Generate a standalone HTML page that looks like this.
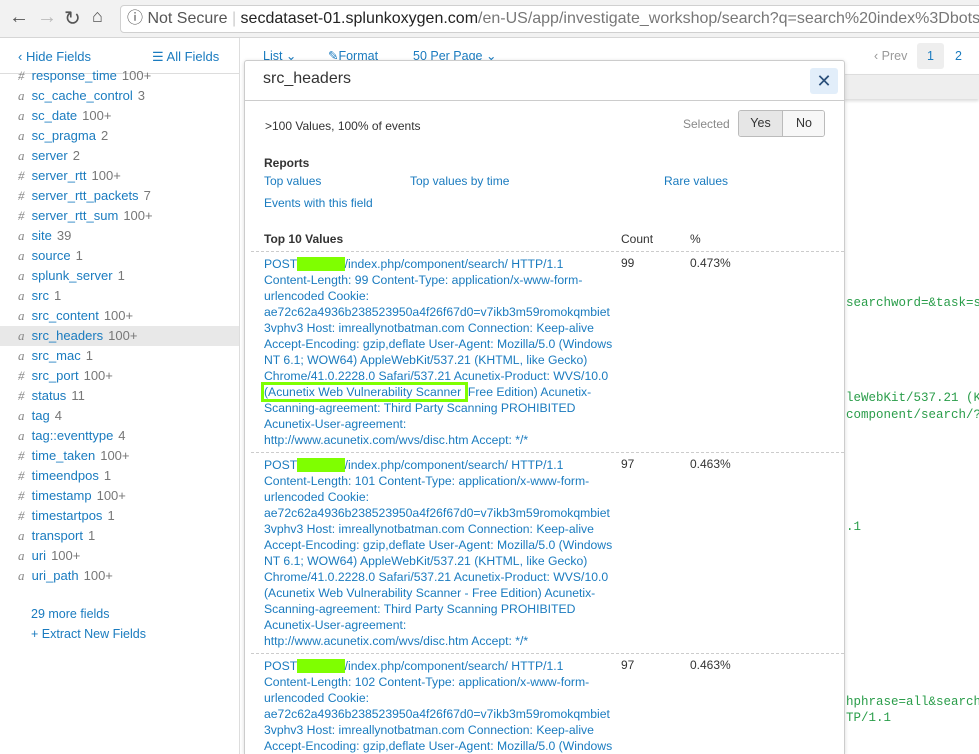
<!DOCTYPE html>
<html><head><meta charset="utf-8"><style>
*{box-sizing:border-box;margin:0;padding:0}
html{width:979px;height:754px;overflow:hidden}
body{width:979px;height:754px;overflow:hidden;background:#fff;font-family:"Liberation Sans",Arial,sans-serif;position:relative;color:#333}
.chrome{position:absolute;left:0;top:0;width:979px;height:38px;background:#f2f2f2;border-bottom:1px solid #d6d6d6}
.addr{position:absolute;left:120px;top:5px;width:870px;height:28px;background:#fff;border:1px solid #d0d0d0;border-radius:4px;font-size:16px;line-height:26px;white-space:nowrap;overflow:hidden}
.nav{position:absolute;top:6px;font-size:20px;color:#555}
.side{position:absolute;left:0;top:38px;width:240px;height:716px;border-right:1px solid #ddd;background:#fff;overflow:hidden}
.f{position:absolute;left:0;width:240px;height:20px;font-size:13px;line-height:20px;padding-left:18px;white-space:nowrap}
.f i{font-style:italic;color:#888;display:inline-block;width:10px;font-family:"Liberation Serif",serif}
.f b{font-weight:normal;color:#1a7bbf}
.f s{text-decoration:none;color:#777;margin-left:5px}
.lnk{color:#1a7bbf}
.pop{position:absolute;left:244px;top:60px;width:601px;height:694px;background:#fff;border:1px solid #ccc;border-bottom:none;border-radius:3px 3px 0 0;box-shadow:0 1px 4px rgba(0,0,0,.15);overflow:hidden}
.pop .hd{height:40px;border-bottom:1px solid #ccc;font-size:16px;line-height:36px;padding-left:18px;color:#333}
.x{position:absolute;right:6px;top:7px;width:28px;height:26px;background:#e2eefa;border-radius:3px;color:#2a4f7a;text-align:center;line-height:26px;font-size:18px}
.t{position:absolute;font-size:12px;white-space:nowrap}
.v{position:absolute;left:19px;width:360px;font-size:12.2px;line-height:16px;color:#1a7bbf;white-space:nowrap}
.g{background:#7fff00;color:#7fff00}
.sep{position:absolute;left:6px;right:0;border-top:1px dashed #ccc}
.mono{position:absolute;left:846px;font-family:"Liberation Mono",monospace;font-size:12.5px;color:#2a9d4a;white-space:nowrap}
</style></head><body>
<div class="chrome">
<div class="nav" style="left:9px">&#8592;</div>
<div class="nav" style="left:37px;color:#bbb">&#8594;</div>
<div class="nav" style="left:64px">&#8635;</div>
<div class="nav" style="left:92px;font-size:18px">&#8962;</div>
<div class="addr"><span style="color:#555;margin-left:6px">&#9432; Not Secure</span><span style="color:#ccc"> | </span><span style="color:#222">secdataset-01.splunkoxygen.com</span><span style="color:#777">/en-US/app/investigate_workshop/search?q=search%20index%3Dbotsv1%20imreallynotbatman</span></div>
</div>
<div class="side">
<div class="t lnk" style="left:18px;top:11px;font-size:13px">&#8249; Hide Fields</div>
<div class="t lnk" style="left:152px;top:11px;font-size:13px">&#9776; All Fields</div>
<div style="position:absolute;left:0;top:35px;width:240px;border-top:1px solid #ddd"></div>
<div class="f" style="top:28px"><i>#</i> <b>response_time</b><s>100+</s></div>
<div class="f" style="top:48px"><i>a</i> <b>sc_cache_control</b><s>3</s></div>
<div class="f" style="top:68px"><i>a</i> <b>sc_date</b><s>100+</s></div>
<div class="f" style="top:88px"><i>a</i> <b>sc_pragma</b><s>2</s></div>
<div class="f" style="top:108px"><i>a</i> <b>server</b><s>2</s></div>
<div class="f" style="top:128px"><i>#</i> <b>server_rtt</b><s>100+</s></div>
<div class="f" style="top:148px"><i>#</i> <b>server_rtt_packets</b><s>7</s></div>
<div class="f" style="top:168px"><i>#</i> <b>server_rtt_sum</b><s>100+</s></div>
<div class="f" style="top:188px"><i>a</i> <b>site</b><s>39</s></div>
<div class="f" style="top:208px"><i>a</i> <b>source</b><s>1</s></div>
<div class="f" style="top:228px"><i>a</i> <b>splunk_server</b><s>1</s></div>
<div class="f" style="top:248px"><i>a</i> <b>src</b><s>1</s></div>
<div class="f" style="top:268px"><i>a</i> <b>src_content</b><s>100+</s></div>
<div class="f" style="top:288px;background:#e8e8e8"><i>a</i> <b>src_headers</b><s>100+</s></div>
<div class="f" style="top:308px"><i>a</i> <b>src_mac</b><s>1</s></div>
<div class="f" style="top:328px"><i>#</i> <b>src_port</b><s>100+</s></div>
<div class="f" style="top:348px"><i>#</i> <b>status</b><s>11</s></div>
<div class="f" style="top:368px"><i>a</i> <b>tag</b><s>4</s></div>
<div class="f" style="top:388px"><i>a</i> <b>tag::eventtype</b><s>4</s></div>
<div class="f" style="top:408px"><i>#</i> <b>time_taken</b><s>100+</s></div>
<div class="f" style="top:428px"><i>#</i> <b>timeendpos</b><s>1</s></div>
<div class="f" style="top:448px"><i>#</i> <b>timestamp</b><s>100+</s></div>
<div class="f" style="top:468px"><i>#</i> <b>timestartpos</b><s>1</s></div>
<div class="f" style="top:488px"><i>a</i> <b>transport</b><s>1</s></div>
<div class="f" style="top:508px"><i>a</i> <b>uri</b><s>100+</s></div>
<div class="f" style="top:528px"><i>a</i> <b>uri_path</b><s>100+</s></div>
<div class="t lnk" style="left:31px;top:569px;font-size:12.5px">29 more fields</div>
<div class="t lnk" style="left:31px;top:589px;font-size:12.5px">+ Extract New Fields</div>
</div>
<div class="t lnk" style="left:263px;top:48px;font-size:12.5px">List &#8964;</div>
<div class="t lnk" style="left:328px;top:48px;font-size:12.5px">&#9998;Format</div>
<div class="t lnk" style="left:413px;top:48px;font-size:12.5px">50 Per Page &#8964;</div>
<div class="t" style="left:874px;top:49px;font-size:12.5px;color:#999">&#8249; Prev</div>
<div style="position:absolute;left:917px;top:43px;width:27px;height:26px;background:#eee;border-radius:3px"></div>
<div class="t lnk" style="left:927px;top:49px;font-size:12.5px">1</div>
<div class="t lnk" style="left:955px;top:49px;font-size:12.5px">2</div>
<div style="position:absolute;left:844px;top:74px;width:135px;height:25px;background:#eee;border-top:1px solid #ddd;box-shadow:0 2px 3px rgba(0,0,0,.15)"></div>
<div class="mono" style="top:296px">searchword=&amp;task=se</div>
<div class="mono" style="top:391px">leWebKit/537.21 (KH</div>
<div class="mono" style="top:408px">component/search/?s</div>
<div class="mono" style="top:520px">.1</div>
<div class="mono" style="top:695px">hphrase=all&amp;searchw</div>
<div class="mono" style="top:711px">TP/1.1</div>
<div class="pop">
<div class="hd">src_headers</div>
<div class="x">&#10005;</div>
<div class="t" style="left:20px;top:58px">&gt;100 Values, 100% of events</div>
<div class="t" style="left:438px;top:56px;color:#888">Selected</div>
<div style="position:absolute;left:493px;top:49px;width:87px;height:27px;border:1px solid #bbb;border-radius:3px;overflow:hidden;font-size:12.5px;line-height:25px">
<div style="position:absolute;left:0;top:0;width:44px;height:25px;background:#e6e6e6;border-right:1px solid #bbb;text-align:center">Yes</div>
<div style="position:absolute;left:44px;top:0;width:42px;height:25px;background:#f7f7f7;text-align:center">No</div></div>
<div class="t" style="left:19px;top:95px;font-weight:bold">Reports</div>
<div class="t lnk" style="left:19px;top:113px">Top values</div>
<div class="t lnk" style="left:165px;top:113px">Top values by time</div>
<div class="t lnk" style="left:419px;top:113px">Rare values</div>
<div class="t lnk" style="left:19px;top:135px">Events with this field</div>
<div class="t" style="left:19px;top:171px;font-weight:bold">Top 10 Values</div>
<div class="t" style="left:376px;top:171px">Count</div>
<div class="t" style="left:445px;top:171px">%</div>
<div class="sep" style="top:190px"></div>
<div class="v" style="top:195px">POST<span class="g">_______</span>/index.php/component/search/ HTTP/1.1<br>Content-Length: 99 Content-Type: application/x-www-form-<br>urlencoded Cookie:<br>ae72c62a4936b238523950a4f26f67d0=v7ikb3m59romokqmbiet<br>3vphv3 Host: imreallynotbatman.com Connection: Keep-alive<br>Accept-Encoding: gzip,deflate User-Agent: Mozilla/5.0 (Windows<br>NT 6.1; WOW64) AppleWebKit/537.21 (KHTML, like Gecko)<br>Chrome/41.0.2228.0 Safari/537.21 Acunetix-Product: WVS/10.0<br><span style="outline:3px solid #7fff00;outline-offset:0">(Acunetix Web Vulnerability Scanner </span>&nbsp;Free Edition) Acunetix-<br>Scanning-agreement: Third Party Scanning PROHIBITED<br>Acunetix-User-agreement:<br>http://www.acunetix.com/wvs/disc.htm Accept: */*</div>
<div class="t" style="left:376px;top:195px">99</div>
<div class="t" style="left:445px;top:195px">0.473%</div>
<div class="sep" style="top:391px"></div>
<div class="v" style="top:396px">POST<span class="g">_______</span>/index.php/component/search/ HTTP/1.1<br>Content-Length: 101 Content-Type: application/x-www-form-<br>urlencoded Cookie:<br>ae72c62a4936b238523950a4f26f67d0=v7ikb3m59romokqmbiet<br>3vphv3 Host: imreallynotbatman.com Connection: Keep-alive<br>Accept-Encoding: gzip,deflate User-Agent: Mozilla/5.0 (Windows<br>NT 6.1; WOW64) AppleWebKit/537.21 (KHTML, like Gecko)<br>Chrome/41.0.2228.0 Safari/537.21 Acunetix-Product: WVS/10.0<br>(Acunetix Web Vulnerability Scanner - Free Edition) Acunetix-<br>Scanning-agreement: Third Party Scanning PROHIBITED<br>Acunetix-User-agreement:<br>http://www.acunetix.com/wvs/disc.htm Accept: */*</div>
<div class="t" style="left:376px;top:396px">97</div>
<div class="t" style="left:445px;top:396px">0.463%</div>
<div class="sep" style="top:592px"></div>
<div class="v" style="top:597px">POST<span class="g">_______</span>/index.php/component/search/ HTTP/1.1<br>Content-Length: 102 Content-Type: application/x-www-form-<br>urlencoded Cookie:<br>ae72c62a4936b238523950a4f26f67d0=v7ikb3m59romokqmbiet<br>3vphv3 Host: imreallynotbatman.com Connection: Keep-alive<br>Accept-Encoding: gzip,deflate User-Agent: Mozilla/5.0 (Windows</div>
<div class="t" style="left:376px;top:597px">97</div>
<div class="t" style="left:445px;top:597px">0.463%</div>
</div>
</body></html>
